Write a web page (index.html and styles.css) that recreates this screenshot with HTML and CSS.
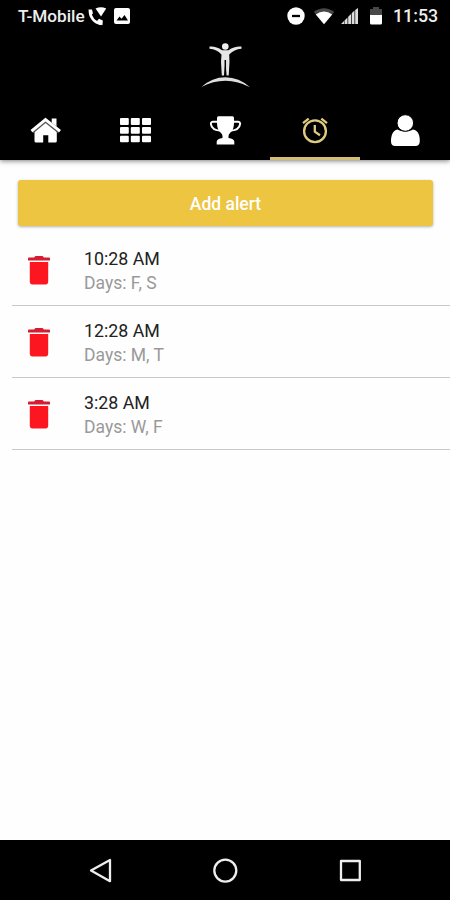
FILE: index.html
```html
<!DOCTYPE html>
<html lang="en">
<head>
<meta charset="utf-8">
<title>Alerts</title>
<link rel="stylesheet" href="styles.css">
</head>
<body>
<div class="phone">
  <header class="header">
    <div class="status">
      <span class="carrier">T-Mobile</span>
      <svg class="wifi-call" width="20" height="22" viewBox="0 0 20 22"><path fill="#fff" d="M8.500 2.500Q14 .2 19.200 2.500L14 10.500Z"/><path fill="none" stroke="#fff" stroke-width="2.800" d="M3 4.500C3 11 7 16.500 14.500 18"/><path fill="#fff" d="M1.500 3.500L5 3.500 6 7.500 3 9.500ZM10 15L12 12.800 15.800 14.500 15.500 19 12 18.500Z"/></svg>
      <svg class="photo" width="16" height="16" viewBox="0 0 16 16"><rect width="16" height="16" rx="2" fill="#fff"/><path d="M2.500 12.500L5.500 8.500 7.500 10.800 10.500 7 14 12.500Z"/></svg>
      <svg class="dnd" width="18" height="18" viewBox="0 0 18 18"><circle cx="9" cy="9" r="8.700" fill="#fff"/><path d="M5 9H13" stroke="#000" stroke-width="2.300"/></svg>
      <svg class="wifi" width="22" height="18" viewBox="0 0 22 18"><path fill="#484848" d="M.8 5Q11-2.500 21.200 5L11 17.300Z"/><path fill="#fff" d="M2.800 7.500Q11 1.500 19.200 7.500L11 17.300Z"/></svg>
      <svg class="signal" width="18" height="17" viewBox="0 0 18 17"><path fill="#ddd" d="M0 16L3 13V16ZM3.500 12.500L6.500 9.500V16H3.500ZM7.200 8.800L10 6V16H7.200ZM10.700 5.300L13.500 2.500V16H10.700ZM14.200 2L17 0V16H14.200Z"/></svg>
      <svg class="battery" width="12" height="18" viewBox="0 0 12 18"><path fill="#484848" d="M3 0H9V2H12V8H0V2H3Z"/><path fill="#fff" d="M0 8H12V16Q12 17.500 10.500 17.500H1.500Q0 17.500 0 16Z"/></svg>
      <span class="clock">11:53</span>
    </div>
    <div class="brand">
      <svg width="70" height="60" viewBox="0 0 70 60"><circle cx="35.300" cy="12.500" r="3.300" fill="#eee"/><path fill="#e6e6e6" d="M19.500 12.600Q26 12 32 16.300H38.500Q44.500 12 51.500 12.600V14.800Q44 15.500 39.200 20.500L39.500 28 38.700 41.500H36.600L35.400 28 34 41.500H31.800L31 28 31.500 20.500Q27 15.500 19.500 14.800Z"/><path stroke="#000" stroke-width="1.500" d="M35.300 26V41.500"/><path fill="#ddd" d="M11.500 53Q22 43.300 35.500 43.300T60 53.300Q48 46.800 35.500 46.800T11.500 53Z"/></svg>
    </div>
    <nav class="tabs">
      <a class="tab"><svg class="icon" viewBox="0 0 36 36"><path fill="#fff" d="M24.700 6.500H29.500V15L24.700 11ZM7.500 19.500L18.500 10 29.800 19.500V29Q29.800 30.500 28.300 30.500H21.300V23.300H16.200V30.500H9Q7.500 30.500 7.500 29Z"/><path fill="none" stroke="#555" stroke-width="4.200" d="M5 19.600L18.500 8.300 32.500 19.600"/><path fill="none" stroke="#fff" stroke-width="2.900" d="M4.500 19.200L18.500 7.600 33 19.200"/></svg></a>
      <a class="tab"><svg class="icon" viewBox="0 0 36 36"><g fill="#fff"><rect x="3" y="6" width="8.800" height="7" rx="1"/><rect x="13.800" y="6" width="9" height="7" rx="1"/><rect x="25" y="6" width="9" height="7" rx="1"/><rect x="3" y="15" width="8.800" height="6.800" rx="1"/><rect x="13.800" y="15" width="9" height="6.800" rx="1"/><rect x="25" y="15" width="9" height="6.800" rx="1"/><rect x="3" y="23.700" width="8.800" height="6.500" rx="1"/><rect x="13.800" y="23.700" width="9" height="6.500" rx="1"/><rect x="25" y="23.700" width="9" height="6.500" rx="1"/></g></svg></a>
      <a class="tab"><svg class="icon" viewBox="0 0 36 36"><path fill="#fff" d="M10 6Q10 4.300 11.500 4.300H25.500Q27 4.300 27 6V11Q27 17.500 23.500 20.500 21.500 22 21.500 24V26Q27 26.800 27.300 29.500V32.500H9.700V29.500Q10.200 26.800 15.500 26V24Q15.500 22 13.500 20.500 10 17.500 10 11Z"/><path fill="none" stroke="#fff" stroke-width="2" d="M11 9.800H6Q3.800 9.800 3.900 12 4.500 18.500 14.500 18.800M26 9.800H31Q33.200 9.800 33.100 12 32.500 18.500 22.500 18.800"/></svg></a>
      <a class="tab active"><svg class="icon" viewBox="0 0 36 36"><g fill="none" stroke="#dfcc80" stroke-width="2.300"><circle cx="18" cy="19.200" r="10.900"/><path d="M6 11.200L11.700 6.700M24.300 6.700L30 11.200M17.800 13V19.700L23 23.200"/></g></svg></a>
      <a class="tab"><svg class="icon" viewBox="0 0 36 36"><path fill="#fff" d="M10.500 17.500C14 20 22.500 20 26 17.500 31.500 18.500 33 24 32.800 29.500 32.600 32.500 31 34 28.500 34H8.500C5.500 34 4 32.500 4 29.500 4 24 5.500 18.500 10.500 17.500Z"/><circle cx="18.300" cy="11" r="8.300" fill="#fff" stroke="#000" stroke-width="1"/></svg></a>
    </nav>
  </header>
  <main class="content">
    <button class="add">Add alert</button>
    <ul class="alerts">
      <li class="alert"><svg class="trash" viewBox="0 0 22 29"><path fill="#d81b30" d="M0 2.500Q0 1.600 1 1.600H6L7.500 0H14.500L16 1.600H21Q22 1.600 22 2.500V4.500H0Z"/><path fill="#fc1620" d="M1.800 6H20.200V25.500Q20.200 28.500 17.500 28.500H4.500Q1.800 28.500 1.800 25.500Z"/></svg><div class="text"><div class="time">10:28 AM</div><div class="days">Days: F, S</div></div></li>
      <li class="alert"><svg class="trash" viewBox="0 0 22 29"><path fill="#d81b30" d="M0 2.500Q0 1.600 1 1.600H6L7.500 0H14.500L16 1.600H21Q22 1.600 22 2.500V4.500H0Z"/><path fill="#fc1620" d="M1.800 6H20.200V25.500Q20.200 28.500 17.500 28.500H4.500Q1.800 28.500 1.800 25.500Z"/></svg><div class="text"><div class="time">12:28 AM</div><div class="days">Days: M, T</div></div></li>
      <li class="alert"><svg class="trash" viewBox="0 0 22 29"><path fill="#d81b30" d="M0 2.500Q0 1.600 1 1.600H6L7.500 0H14.500L16 1.600H21Q22 1.600 22 2.500V4.500H0Z"/><path fill="#fc1620" d="M1.800 6H20.200V25.500Q20.200 28.500 17.500 28.500H4.500Q1.800 28.500 1.800 25.500Z"/></svg><div class="text"><div class="time">3:28 AM</div><div class="days">Days: W, F</div></div></li>
    </ul>
  </main>
  <footer class="navbar">
    <svg width="26" height="26" viewBox="0 0 26 26"><path d="M4 12.600L23 2V23.200Z"/></svg>
    <svg width="26" height="26" viewBox="0 0 26 26"><circle cx="13.300" cy="12.600" r="11"/></svg>
    <svg width="26" height="26" viewBox="0 0 26 26"><rect x="4" y="3" width="18.800" height="19"/></svg>
  </footer>
</div>
</body>
</html>
```
FILE: styles.css
```css
* { box-sizing: border-box; }
body { margin: 0; font-family: Roboto, sans-serif; background: #fefefe; }
.phone { width: 450px; height: 900px; display: flex; flex-direction: column; overflow: hidden; }
svg { display: block; flex: none; }
.header { height: 160px; background: #000; color: #fff; box-shadow: 0 1px 5px rgba(0,0,0,.5); flex: none; }
.status { height: 34px; display: flex; align-items: center; padding: 0 12px 2px 18px; }
.carrier { font-size: 17.200px; font-weight: 500; width: 69px; line-height: 20px; white-space: nowrap; color: #eee; }
.wifi-call { margin-top: 2px; }
.photo { margin-left: 7px; }
.dnd { margin-left: auto; }
.wifi { margin-left: 8px; }
.signal { margin-left: 6px; }
.battery { margin-left: 11px; }
.clock { font-size: 17.800px; font-weight: 500; width: 45px; margin-left: 11px; line-height: 20px; white-space: nowrap; color: #eee; }
.brand { height: 66px; display: flex; justify-content: center; }
.tabs { display: grid; grid-template-columns: repeat(5, 1fr); height: 60px; }
.tab { display: flex; align-items: center; justify-content: center; }
.tab.active { box-shadow: inset 0 -3px #d3bf73; }
.icon { width: 36px; height: 36px; }
.content { flex: 1; padding-top: 20px; }
.add { display: block; width: 415px; height: 46px; margin: 0 0 0 18px; padding: 2px 0 0; border: 0; border-radius: 3px; background: #edc540; color: #fff; font: 500 17.500px Roboto, sans-serif; box-shadow: 0 1px 3px rgba(0,0,0,.3); }
.alerts { list-style: none; margin: 8px 0 0 12px; padding: 0; }
.alert { display: flex; align-items: center; height: 72px; padding: 2px 0 0 16px; border-bottom: 1px solid #c9c9c9; }
.trash { width: 22px; height: 29px; }
.text { margin-left: 34px; padding-top: 1px; }
.time { font-size: 17.800px; line-height: 24px; color: #222; }
.days { font-size: 17.500px; line-height: 24px; color: #999; }
.navbar { height: 60px; background: #000; display: flex; justify-content: space-between; padding: 18px 87px 0 87px; }
.navbar svg { fill: none; stroke: #eee; stroke-width: 2.300; stroke-linejoin: round; }
```
